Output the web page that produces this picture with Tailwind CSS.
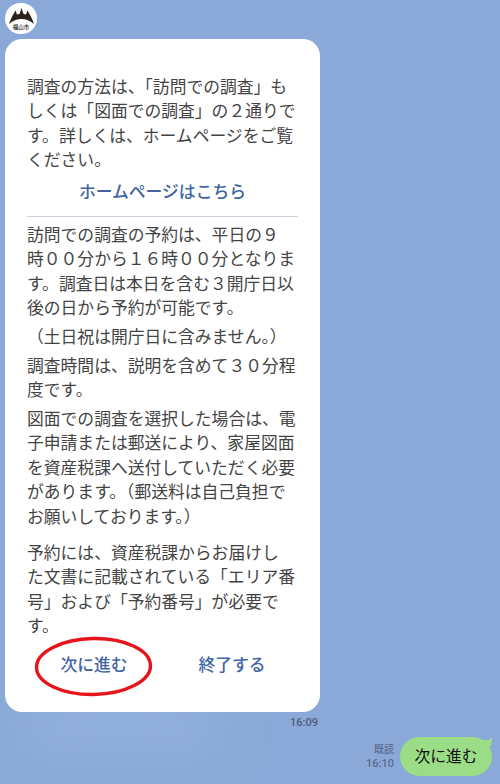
<!DOCTYPE html>
<html lang="ja">
<head>
    <meta charset="UTF-8">
    <title>LINE</title>
    <script src="https://cdn.jsdelivr.net/npm/@tailwindcss/browser@4"></script>
</head>
<body class="m-0">
<div class="relative w-[500px] h-[784px] overflow-hidden bg-[#8aa9d8] font-['Roboto','Noto_Sans_CJK_JP',sans-serif]">
    <!-- faint wallpaper clouds -->
    <div class="absolute left-[20px] top-[700px] w-[200px] h-[50px] rounded-full bg-[#93b1dc] blur-xl"></div>

    <!-- avatar -->
    <div class="relative pl-[5px] pt-[3px] h-[39px]">
        <div class="w-[32px] h-[31px] rounded-full bg-white flex flex-col items-center overflow-hidden">
            <svg class="mt-[5px] w-[25px] h-[16px]" viewBox="0 0 25 16">
                <path fill="#2b211d" d="M0 16C1.500 11 4 7 6.500 2.500L8 6.500L10.500 6L12.500 0L14.500 6L17 6.500L18.500 2.500C21 7 23.500 11 25 16C21 12.500 17 11 12.500 11C8 11 4 12.500 0 16Z"/>
            </svg>
            <span class="text-[5.500px] leading-[7px] text-[#222] font-medium">福山市</span>
        </div>
    </div>

    <!-- message card -->
    <div class="relative ml-[5px] w-[315px] h-[673px] bg-white rounded-[17px] pt-[36px] px-[22px] text-[16.8px] leading-[24.4px] text-[#444]">
        <p>調査の方法は、「訪問での調査」も<br>しくは「図面での調査」の２通りで<br>す。詳しくは、ホームページをご覧<br>ください。</p>
        <p class="mt-[7px] text-center font-medium text-[#42659f]">ホームページはこちら</p>
        <div class="mt-[12px] mb-[6px] h-px bg-[#cdd2e0]"></div>
        <p>訪問での調査の予約は、平日の９<br>時００分から１６時００分となりま<br>す。調査日は本日を含む３開庁日以<br>後の日から予約が可能です。</p>
        <p class="mt-[4px]">（土日祝は開庁日に含みません。）</p>
        <p class="mt-[5px]">調査時間は、説明を含めて３０分程<br>度です。</p>
        <p class="mt-[4px]">図面での調査を選択した場合は、電<br>子申請または郵送により、家屋図面<br>を資産税課へ送付していただく必要<br>があります。（郵送料は自己負担で<br>お願いしております。）</p>
        <p class="mt-[12px]">予約には、資産税課からお届けし<br>た文書に記載されている「エリア番<br>号」および「予約番号」が必要で<br>す。</p>
        <div class="mt-[14px] flex font-medium text-[#42659f]">
            <span class="w-[134px] shrink-0 text-center">次に進む</span>
            <span class="w-[142px] shrink-0 text-center">終了する</span>
        </div>
    </div>
    <div class="relative mt-[4px] w-[320px] pr-[2px] text-right text-[11px] leading-[13px] font-medium text-[#4f5c78]">16:09</div>

    <!-- my reply -->
    <div class="absolute left-[364px] top-[737px] flex items-center">
        <div class="w-[30px] text-right text-[11px] leading-[14px] font-medium text-[#5a6a8c]">
            <div class="text-[10px]">既読</div>
            <div>16:10</div>
        </div>
        <div class="relative ml-[6px] w-[92px] h-[39px] rounded-[20px] bg-[#9bdc87] flex items-center justify-center text-[15.800px] text-[#111]">次に進む
            <svg class="absolute right-0 top-0 w-[10px] h-[10px]" viewBox="0 0 10 10"><path fill="#9bdc87" d="M0 3L7 3L10 0L9 9L3 9Z"/></svg>
        </div>
    </div>

    <!-- red ellipse annotation -->
    <svg class="absolute left-[33px] top-[635px] w-[122px] h-[64px]" viewBox="0 0 122 64">
        <ellipse cx="60.500" cy="31.500" rx="57" ry="28" fill="none" stroke="#e8141c" stroke-width="3.400" transform="rotate(-1 60.500 31.500)"/>
    </svg>
</div>
</body>
</html>
